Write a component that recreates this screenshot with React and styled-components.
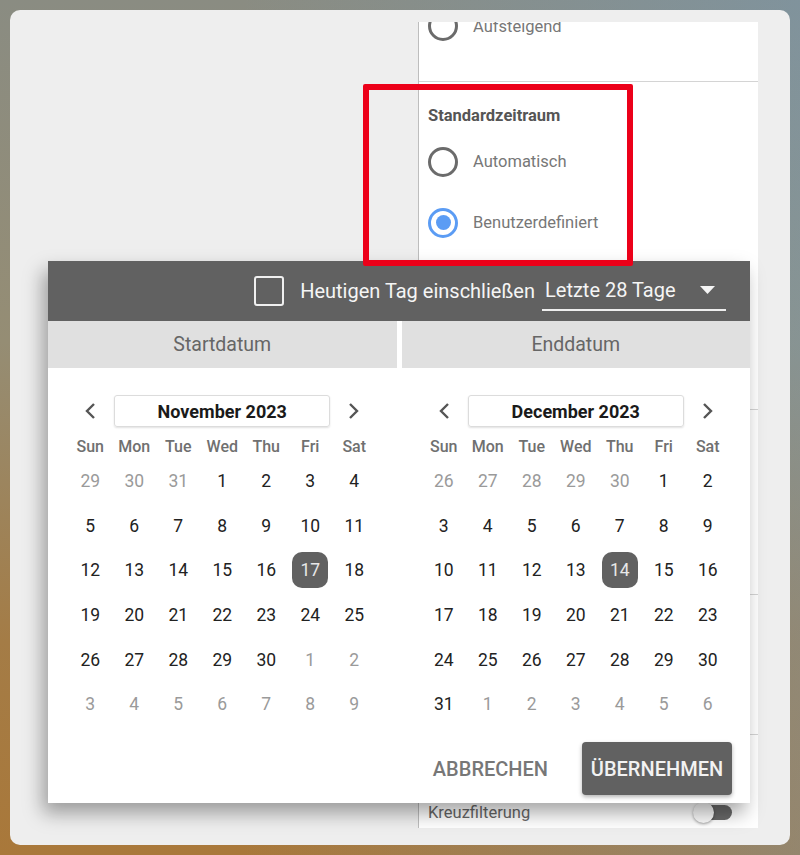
import React from 'react';
import styled, { createGlobalStyle } from 'styled-components';

const GlobalStyle = createGlobalStyle`
  html, body {
    margin: 0;
    padding: 0;
  }
  body {
    width: 800px;
    height: 855px;
    overflow: hidden;
    font-family: Roboto, 'Noto Sans', sans-serif;
    background:
      linear-gradient(to right, rgba(110, 160, 200, 0) 30%, rgba(110, 160, 205, 0.35) 100%),
      linear-gradient(to bottom, #8a8c82 0%, #958d74 40%, #a47c46 75%, #a9783a 100%);
  }
`;

const Frame = styled.div`
  padding: 10px;
  height: 855px;
  box-sizing: border-box;
`;

const Card = styled.div`
  position: relative;
  height: 835px;
  background: #eeeeee;
  border-radius: 10px;
  display: flex;
  justify-content: flex-end;
  align-items: flex-start;
  padding: 12px 32px 0 0;
  box-sizing: border-box;
`;

/* settings side panel behind the dialog */
const Panel = styled.aside`
  width: 340px;
  height: 806px;
  background: #fff;
  border-left: 1px solid #bdbdbd;
  overflow: hidden;
  box-sizing: border-box;
`;

const PanelScroll = styled.div`
  margin-top: -18px;
`;

const Section = styled.section`
  height: ${p => p.$height}px;
  padding: ${p => p.$top || 0}px 26px 0 9px;
  border-bottom: ${p => (p.$last ? 'none' : '1px solid #d4d4d4')};
  box-sizing: border-box;
`;

const SectionLabel = styled.div`
  font-size: 16.5px;
  font-weight: 700;
  line-height: 20px;
  color: #555;
  margin-bottom: 5px;
`;

const RadioRow = styled.label`
  display: flex;
  align-items: center;
  gap: 15px;
  height: ${p => p.$height || 61}px;
  font-size: 16.5px;
  color: #777;
`;

const RadioCircle = styled.span`
  width: 30px;
  height: 30px;
  box-sizing: border-box;
  border-radius: 50%;
  border: 3px solid ${p => (p.$checked ? '#5b9cf4' : '#6b6b6b')};
  display: flex;
  align-items: center;
  justify-content: center;
  &::after {
    content: '';
    display: ${p => (p.$checked ? 'block' : 'none')};
    width: 15px;
    height: 15px;
    border-radius: 50%;
    background: #5b9cf4;
  }
`;

const SwitchRow = styled.div`
  display: flex;
  align-items: center;
  justify-content: space-between;
  height: 30px;
  font-size: 16.5px;
  color: #666;
`;

const Switch = styled.span`
  position: relative;
  width: 37px;
  height: 15px;
  border-radius: 8px;
  background: #6a6a6a;
  &::after {
    content: '';
    position: absolute;
    left: -2px;
    top: -3px;
    width: 21px;
    height: 21px;
    border-radius: 50%;
    background: #fafafa;
    box-shadow: 0 1px 3px rgba(0, 0, 0, 0.4);
  }
`;

/* annotation box */
const Highlight = styled.div`
  position: absolute;
  left: 353px;
  top: 74px;
  width: 270px;
  height: 182px;
  border: 6px solid #ec0019;
  border-radius: 2px;
  box-sizing: border-box;
  z-index: 3;
`;

/* date range dialog */
const Dialog = styled.div`
  position: absolute;
  left: 38px;
  top: 251px;
  width: 702px;
  height: 542px;
  background: #fff;
  display: flex;
  flex-direction: column;
  box-shadow: -5px 10px 18px rgba(0, 0, 0, 0.35);
  z-index: 2;
`;

const DialogHeader = styled.div`
  height: 60px;
  flex-shrink: 0;
  background: #616161;
  display: flex;
  align-items: center;
  justify-content: flex-end;
  padding-right: 24px;
  color: #f5f5f5;
  font-size: 20px;
`;

const Checkbox = styled.span`
  width: 30px;
  height: 30px;
  box-sizing: border-box;
  border: 2px solid #f0f0f0;
  border-radius: 3px;
  margin-right: 16px;
`;

const CheckLabel = styled.span`
  margin-right: 7px;
`;

const Select = styled.div`
  width: 184px;
  height: 40px;
  box-sizing: border-box;
  display: flex;
  align-items: center;
  justify-content: space-between;
  padding: 0 11px 0 3px;
  border-bottom: 2px solid #eeeeee;
`;

const Tabs = styled.div`
  display: grid;
  grid-template-columns: 1fr 1fr;
  gap: 5px;
  height: 47px;
  flex-shrink: 0;
`;

const Tab = styled.div`
  background: #e0e0e0;
  color: #666;
  font-size: 19.5px;
  display: flex;
  align-items: center;
  justify-content: center;
`;

const Calendars = styled.div`
  display: grid;
  grid-template-columns: 1fr 1fr;
  gap: 5px;
  justify-items: center;
`;

const Calendar = styled.div`
  width: 308px;
  padding-top: 27px;
`;

const Nav = styled.div`
  display: grid;
  grid-template-columns: 44px 1fr 44px;
  align-items: center;
  height: 32px;
  margin-bottom: 6px;
`;

const NavArrow = styled.span`
  display: flex;
  justify-content: center;
  align-items: center;
`;

const MonthBox = styled.div`
  height: 32px;
  margin: 0 2px;
  box-sizing: border-box;
  border: 1px solid #dcdcdc;
  border-radius: 3px;
  box-shadow: 0 1px 2px rgba(0, 0, 0, 0.12);
  display: flex;
  align-items: center;
  justify-content: center;
  font-size: 18px;
  font-weight: 700;
  color: #1a1a1a;
`;

const DayGrid = styled.div`
  display: grid;
  grid-template-columns: repeat(7, 44px);
`;

const WeekDay = styled.div`
  height: 26px;
  display: flex;
  align-items: center;
  justify-content: center;
  font-size: 16px;
  font-weight: 500;
  color: #707070;
`;

const DayCell = styled.div`
  height: 44.6px;
  display: flex;
  align-items: center;
  justify-content: center;
`;

const Day = styled.span`
  width: 36px;
  height: 36px;
  border-radius: 10px;
  display: flex;
  align-items: center;
  justify-content: center;
  font-size: 17.5px;
  color: ${p => (p.$selected ? '#e8e8e8' : p.$muted ? '#9a9a9a' : '#222')};
  background: ${p => (p.$selected ? '#616161' : 'transparent')};
`;

const Footer = styled.div`
  margin-top: auto;
  display: flex;
  justify-content: flex-end;
  align-items: center;
  gap: 18px;
  padding: 0 18px 8px 0;
`;

const TextButton = styled.button`
  height: 53px;
  padding: 0 16px;
  border: none;
  background: none;
  font-family: inherit;
  font-size: 20px;
  font-weight: 500;
  color: #777;
`;

const RaisedButton = styled.button`
  width: 150px;
  height: 53px;
  border: none;
  border-radius: 4px;
  background: #616161;
  color: #f2f2f2;
  font-family: inherit;
  font-size: 20px;
  font-weight: 500;
  box-shadow: 0 2px 4px rgba(0, 0, 0, 0.3);
`;

const WEEKDAYS = ['Sun', 'Mon', 'Tue', 'Wed', 'Thu', 'Fri', 'Sat'];

function buildMonth(year, month) {
  const first = new Date(year, month, 1);
  const start = new Date(year, month, 1 - first.getDay());
  const days = [];
  for (let i = 0; i < 42; i++) {
    const d = new Date(start.getFullYear(), start.getMonth(), start.getDate() + i);
    days.push({ day: d.getDate(), muted: d.getMonth() !== month });
  }
  return days;
}

const Chevron = ({ dir }) => (
  <svg width="14" height="20" viewBox="0 0 14 20">
    <polyline
      points={dir === 'left' ? '11,3 4,10 11,17' : '3,3 10,10 3,17'}
      fill="none"
      stroke="#555"
      strokeWidth="2.4"
    />
  </svg>
);

const MonthCalendar = ({ title, year, month, selected }) => (
  <Calendar>
    <Nav>
      <NavArrow><Chevron dir="left" /></NavArrow>
      <MonthBox>{title}</MonthBox>
      <NavArrow><Chevron dir="right" /></NavArrow>
    </Nav>
    <DayGrid>
      {WEEKDAYS.map(w => <WeekDay key={w}>{w}</WeekDay>)}
      {buildMonth(year, month).map((d, i) => (
        <DayCell key={i}>
          <Day $muted={d.muted} $selected={!d.muted && d.day === selected}>
            {d.day}
          </Day>
        </DayCell>
      ))}
    </DayGrid>
  </Calendar>
);

export default function App() {
  return (
    <>
      <GlobalStyle />
      <Frame>
        <Card>
          <Panel>
            <PanelScroll>
              <Section $height={78}>
                <RadioRow $height={44}>
                  <RadioCircle />
                  Aufsteigend
                </RadioRow>
              </Section>
              <Section $height={328} $top={24}>
                <SectionLabel>Standardzeitraum</SectionLabel>
                <RadioRow>
                  <RadioCircle />
                  Automatisch
                </RadioRow>
                <RadioRow>
                  <RadioCircle $checked />
                  Benutzerdefiniert
                </RadioRow>
              </Section>
              <Section $height={185} />
              <Section $height={140} />
              <Section $height={120} $top={62} $last>
                <SwitchRow>
                  Kreuzfilterung
                  <Switch />
                </SwitchRow>
              </Section>
            </PanelScroll>
          </Panel>

          <Highlight />

          <Dialog>
            <DialogHeader>
              <Checkbox />
              <CheckLabel>Heutigen Tag einschließen</CheckLabel>
              <Select>
                Letzte 28 Tage
                <svg width="15" height="8" viewBox="0 0 15 8">
                  <polygon points="0,0 15,0 7.5,8" fill="#f5f5f5" />
                </svg>
              </Select>
            </DialogHeader>
            <Tabs>
              <Tab>Startdatum</Tab>
              <Tab>Enddatum</Tab>
            </Tabs>
            <Calendars>
              <MonthCalendar title="November 2023" year={2023} month={10} selected={17} />
              <MonthCalendar title="December 2023" year={2023} month={11} selected={14} />
            </Calendars>
            <Footer>
              <TextButton>ABBRECHEN</TextButton>
              <RaisedButton>ÜBERNEHMEN</RaisedButton>
            </Footer>
          </Dialog>
        </Card>
      </Frame>
    </>
  );
}
